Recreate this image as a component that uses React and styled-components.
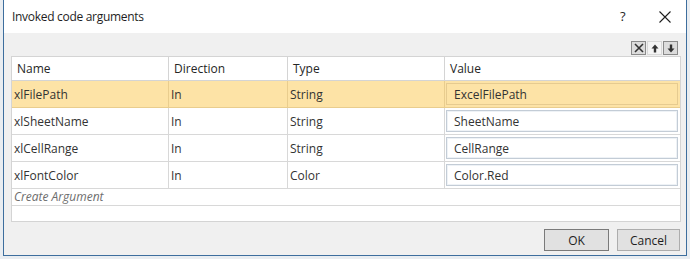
import React from 'react'
import styled, { createGlobalStyle } from 'styled-components'

const Global = createGlobalStyle`
  html, body { margin: 0; padding: 0; }
  body {
    background: #e9edf1;
    font-family: "Open Sans", "Noto Sans", Arial, sans-serif;
    font-size: 12px;
    color: #262626;
  }
`

const args = [
  { name: 'xlFilePath', dir: 'In', type: 'String', value: 'ExcelFilePath', selected: true },
  { name: 'xlSheetName', dir: 'In', type: 'String', value: 'SheetName' },
  { name: 'xlCellRange', dir: 'In', type: 'String', value: 'CellRange' },
  { name: 'xlFontColor', dir: 'In', type: 'Color', value: 'Color.Red' },
]

const App = () => {
  return (
    <>
      <Global />
      <Window>
        <TitleBar>
          <Title>Invoked code arguments</Title>
          <Help>?</Help>
          <Close>
            <svg width="12" height="12" viewBox="0 0 12 12">
              <path d="M0.5 0.5 L11.5 11.5 M11.5 0.5 L0.5 11.5" stroke="#1e1e1e" strokeWidth="1.1" />
            </svg>
          </Close>
        </TitleBar>
        <Body>
          <Toolbar>
            <ToolBtn dark>
              <svg width="10" height="10" viewBox="0 0 10 10">
                <path d="M1 1 L9 9 M9 1 L1 9" stroke="#333" strokeWidth="1.6" />
              </svg>
            </ToolBtn>
            <ToolBtn>
              <svg width="8" height="9" viewBox="0 0 8 9">
                <path d="M4 0.5 L7.5 4.5 L5.2 4.5 L5.2 8.5 L2.8 8.5 L2.8 4.5 L0.5 4.5 Z" fill="#333" />
              </svg>
            </ToolBtn>
            <ToolBtn dark>
              <svg width="8" height="9" viewBox="0 0 8 9">
                <path d="M4 8.5 L7.5 4.5 L5.2 4.5 L5.2 0.5 L2.8 0.5 L2.8 4.5 L0.5 4.5 Z" fill="#333" />
              </svg>
            </ToolBtn>
          </Toolbar>
          <Grid>
            <HeaderRow>
              <HeadCell>Name</HeadCell>
              <HeadCell>Direction</HeadCell>
              <HeadCell>Type</HeadCell>
              <HeadCell last>Value</HeadCell>
            </HeaderRow>
            {args.map((a) => (
              <Row key={a.name} selected={a.selected}>
                <Cell selected={a.selected}>{a.name}</Cell>
                <Cell selected={a.selected}>{a.dir}</Cell>
                <Cell selected={a.selected}>{a.type}</Cell>
                <ValueCell>
                  <TextBox selected={a.selected}>{a.value}</TextBox>
                </ValueCell>
              </Row>
            ))}
            <CreateRow>Create Argument</CreateRow>
            <EmptyRow />
          </Grid>
          <Footer>
            <Button primary>OK</Button>
            <Button>Cancel</Button>
          </Footer>
        </Body>
      </Window>
    </>
  )
}

export default App

const Window = styled.div`
  margin-left: 3px;
  width: 682px;
  height: 255px;
  border: 1px solid #3d6e9e;
  border-top: none;
  display: flex;
  flex-direction: column;
  background: #f0f0f0;
`
const TitleBar = styled.div`
  height: 33px;
  background: #fff;
  display: flex;
  align-items: center;
  padding-left: 8px;
`
const Title = styled.div`
  flex: 1;
  font-size: 12px;
  letter-spacing: -0.3px;
  padding-bottom: 1px;
  color: #1e1e1e;
`
const Help = styled.div`
  width: 14px;
  font-size: 13px;
  margin-right: 25px;
  padding-bottom: 1px;
`
const Close = styled.div`
  width: 12px;
  height: 12px;
  display: flex;
  margin-right: 15px;
`
const Body = styled.div`
  flex: 1;
  display: flex;
  flex-direction: column;
  padding: 8px 5px 0 7px;
`
const Toolbar = styled.div`
  display: flex;
  justify-content: flex-end;
  gap: 1px;
  height: 13px;
  margin-right: 3px;
`
const ToolBtn = styled.div`
  width: 13px;
  height: 12px;
  border: 1px solid ${(p) => (p.dark ? '#8a8a8a' : '#d8d8d8')};
  background: ${(p) => (p.dark ? '#dcdcdc' : '#f4f4f4')};
  display: flex;
  align-items: center;
  justify-content: center;
`
const Grid = styled.div`
  margin-top: 2px;
  background: #fff;
  border: 1px solid #d4d4d4;
  display: flex;
  flex-direction: column;
`
const cols = '157px 119px 157px 1fr'
const HeaderRow = styled.div`
  display: grid;
  grid-template-columns: ${cols};
  height: 23px;
  border-bottom: 1px solid #d4d4d4;
`
const HeadCell = styled.div`
  display: flex;
  align-items: center;
  padding-left: 5px;
  border-right: ${(p) => (p.last ? 'none' : '1px solid #d4d4d4')};
`
const Row = styled.div`
  display: grid;
  grid-template-columns: ${cols};
  height: 26px;
  background: ${(p) => (p.selected ? '#fde3a6' : '#fff')};
  border-bottom: 1px solid ${(p) => (p.selected ? '#e9cd8e' : '#d8d8d8')};
`
const Cell = styled.div`
  display: flex;
  align-items: center;
  padding-left: 2px;
  border-right: 1px solid ${(p) => (p.selected ? '#e9cd8e' : '#d8d8d8')};
  color: #333;
`
const ValueCell = styled.div`
  padding: 2px 2px 2px 1px;
  display: flex;
`
const TextBox = styled.div`
  flex: 1;
  display: flex;
  align-items: center;
  padding-left: 7px;
  border: 1px solid ${(p) => (p.selected ? '#e6cb90' : '#c3ccd6')};
  box-shadow: inset 0 0 0 1px ${(p) => (p.selected ? '#fde3a6' : '#eef2f6')};
  background: ${(p) => (p.selected ? '#fde3a6' : '#fff')};
  color: #333;
`
const CreateRow = styled.div`
  height: 16px;
  line-height: 15px;
  padding-left: 2px;
  font-style: italic;
  color: #6d6d6d;
  border-bottom: 1px solid #d8d8d8;
`
const EmptyRow = styled.div`
  height: 15px;
`
const Footer = styled.div`
  display: flex;
  justify-content: flex-end;
  gap: 8px;
  margin-top: 7px;
  padding-right: 1px;
`
const Button = styled.div`
  width: ${(p) => (p.primary ? '63px' : '61px')};
  height: 20px;
  border: 1px solid ${(p) => (p.primary ? '#7a7a7a' : '#adadad')};
  background: #e1e1e1;
  display: flex;
  align-items: center;
  justify-content: center;
  color: #1e1e1e;
`
